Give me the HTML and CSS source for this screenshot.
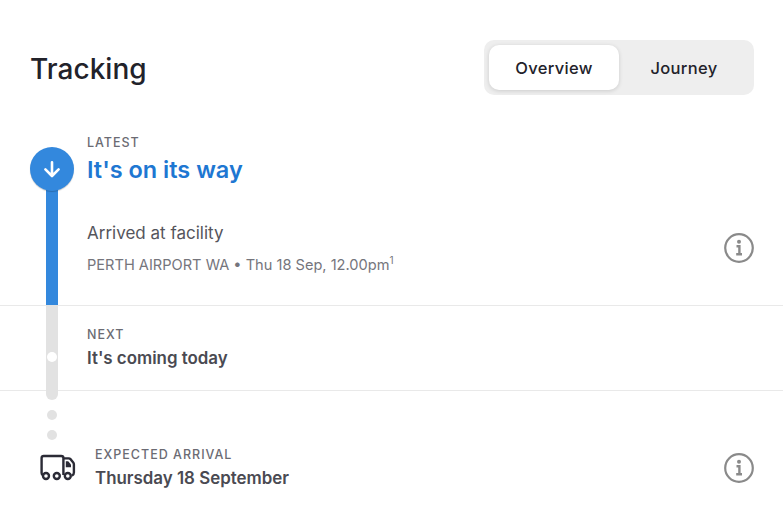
FILE: index.html
```html
<!DOCTYPE html>
<html lang="en">
<head>
  <meta charset="UTF-8">
  <title>Tracking</title>
  <meta name="viewport" content="width=device-width, initial-scale=1.0">
  <link rel="stylesheet" href="styles.css">
</head>
<body>
  <header class="top">
    <h1>Tracking</h1>
    <div class="tabs">
      <div class="tab tab-active">Overview</div>
      <div class="tab">Journey</div>
    </div>
  </header>

  <main class="timeline">
    <!-- rail sits over the row dividers -->
    <div class="rail">
      <div class="rail-done"></div>
      <div class="rail-next"><span class="rail-knob"></span></div>
      <span class="rail-dot"></span>
      <span class="rail-dot"></span>
    </div>
    <div class="badge">
      <svg width="20" height="20" viewBox="0 0 20 20" fill="none" stroke="#fff" stroke-width="2.6" stroke-linecap="round" stroke-linejoin="round">
        <path d="M10 3.2V16.2M3.4 10.4L10 17L16.6 10.4"/>
      </svg>
    </div>

    <section class="row row-latest">
      <div class="label">LATEST</div>
      <div class="headline">It's on its way</div>
      <div class="event">
        <div>
          <div class="event-name">Arrived at facility</div>
          <div class="event-meta">PERTH AIRPORT WA • Thu 18 Sep, 12.00pm<sup>1</sup></div>
        </div>
        <svg class="info" width="32" height="32" viewBox="0 0 32 32" fill="none" stroke="#8a8a8a">
          <circle cx="16" cy="16" r="13.8" stroke-width="2.2"/>
          <circle cx="16" cy="9.8" r="2" fill="#8a8a8a" stroke="none"/>
          <path d="M13.5 14.3H16.4V22M13.2 22.3H19" stroke-width="2.4"/>
        </svg>
      </div>
    </section>

    <section class="row row-next">
      <div class="label">NEXT</div>
      <div class="strong">It's coming today</div>
    </section>

    <section class="row-arrival">
      <svg class="truck" width="36" height="28" viewBox="0 0 36 28" fill="none" stroke="#2b2b36" stroke-width="2.4" stroke-linejoin="round">
        <path d="M3.2 21.5C2 21 1.6 20.2 1.6 19V4C1.6 2.6 2.4 2 3.6 2H21.2C22.6 2 23.4 2.8 23.4 4V21"/>
        <path d="M23.4 4.4H28.6C29.6 4.4 30.2 4.8 30.8 5.4L33.2 8.4C33.7 9 33.9 9.6 33.9 10.4V18.4C33.9 20 33.4 21 32 21.6"/>
        <path d="M25.8 7.2H28.2L31 10.6V13.2H25.8Z" fill="#2b2b36" stroke="none"/>
        <circle cx="6" cy="22" r="3"/>
        <circle cx="16.8" cy="22" r="3"/>
        <circle cx="27.8" cy="22" r="3"/>
      </svg>
      <div>
        <div class="label">EXPECTED ARRIVAL</div>
        <div class="strong">Thursday 18 September</div>
      </div>
      <svg class="info" width="32" height="32" viewBox="0 0 32 32" fill="none" stroke="#8a8a8a">
        <circle cx="16" cy="16" r="13.8" stroke-width="2.2"/>
        <circle cx="16" cy="9.8" r="2" fill="#8a8a8a" stroke="none"/>
        <path d="M13.5 14.3H16.4V22M13.2 22.3H19" stroke-width="2.4"/>
      </svg>
    </section>
  </main>
</body>
</html>
```

FILE: styles.css
```css
body {
  margin: 0;
  background-color: #fff;
  color: #4a4a52;
  font-family: 'Inter', sans-serif;
  overflow: hidden;
}

.top {
  display: flex;
  justify-content: space-between;
  align-items: center;
  padding: 40px 29px 0 30px;
}

h1 {
  margin: 2px 0 0;
  font-size: 28px;
  font-weight: 500;
  letter-spacing: 0.05px;
  color: #22222a;
}

.tabs {
  display: flex;
  width: 260px;
  padding: 5px;
  background: #eee;
  border-radius: 10px;
}

.tab {
  flex: 1;
  height: 45px;
  line-height: 46px;
  text-align: center;
  font-size: 16.5px;
  font-weight: 500;
  letter-spacing: 0.3px;
  color: #22222a;
  border-radius: 10px;
}

.tab-active {
  background: #fff;
  box-shadow: 0 1px 4px rgba(0, 0, 0, 0.15);
}

.timeline {
  position: relative;
}

.rail {
  position: absolute;
  left: 46px;
  top: 95px;
  width: 12px;
}

.rail-done {
  height: 115px;
  background: #3388dd;
}

.rail-next {
  position: relative;
  height: 95px;
  background: #e2e2e2;
  border-radius: 0 0 6px 6px;
}

.rail-knob {
  position: absolute;
  left: 1px;
  top: 47px;
  width: 10px;
  height: 10px;
  background: #fff;
  border-radius: 50%;
}

.rail-dot {
  display: block;
  width: 10px;
  height: 10px;
  margin: 10px 0 0 1px;
  background: #e2e2e2;
  border-radius: 50%;
}

.badge {
  position: absolute;
  left: 30px;
  top: 52px;
  display: flex;
  justify-content: center;
  align-items: center;
  width: 44px;
  height: 44px;
  background: #3388dd;
  border-radius: 50%;
  box-shadow: 0 1px 1px rgba(0, 0, 0, 0.2);
}

.row {
  box-sizing: border-box;
  padding-left: 87px;
  border-bottom: 1px solid #e9e9e9;
}

.row-latest {
  height: 211px;
  padding-top: 40px;
}

.row-next {
  height: 85px;
  padding-top: 21px;
}

.label {
  font-size: 12.5px;
  font-weight: 500;
  line-height: 16px;
  letter-spacing: 1px;
  color: #6b6b73;
}

.headline {
  margin-top: 3px;
  font-size: 23.5px;
  font-weight: 600;
  line-height: 32px;
  color: #1e77d2;
}

.event {
  display: flex;
  justify-content: space-between;
  align-items: center;
  margin-top: 35px;
  padding-right: 28px;
}

.event-name {
  font-size: 17px;
  line-height: 24px;
  color: #55555c;
}

.event-meta {
  margin-top: 10px;
  font-size: 14.6px;
  line-height: 20px;
  color: #75757c;
}

sup {
  font-size: 10px;
  line-height: 0;
}

.strong {
  margin-top: 3px;
  font-size: 16.9px;
  font-weight: 600;
  line-height: 24px;
}

.row-arrival {
  display: flex;
  align-items: center;
  height: 60px;
  margin-top: 47px;
  padding: 0 28px 0 40px;
}

.truck {
  margin-right: 19px;
}

.row-arrival .info {
  margin-left: auto;
}
```
